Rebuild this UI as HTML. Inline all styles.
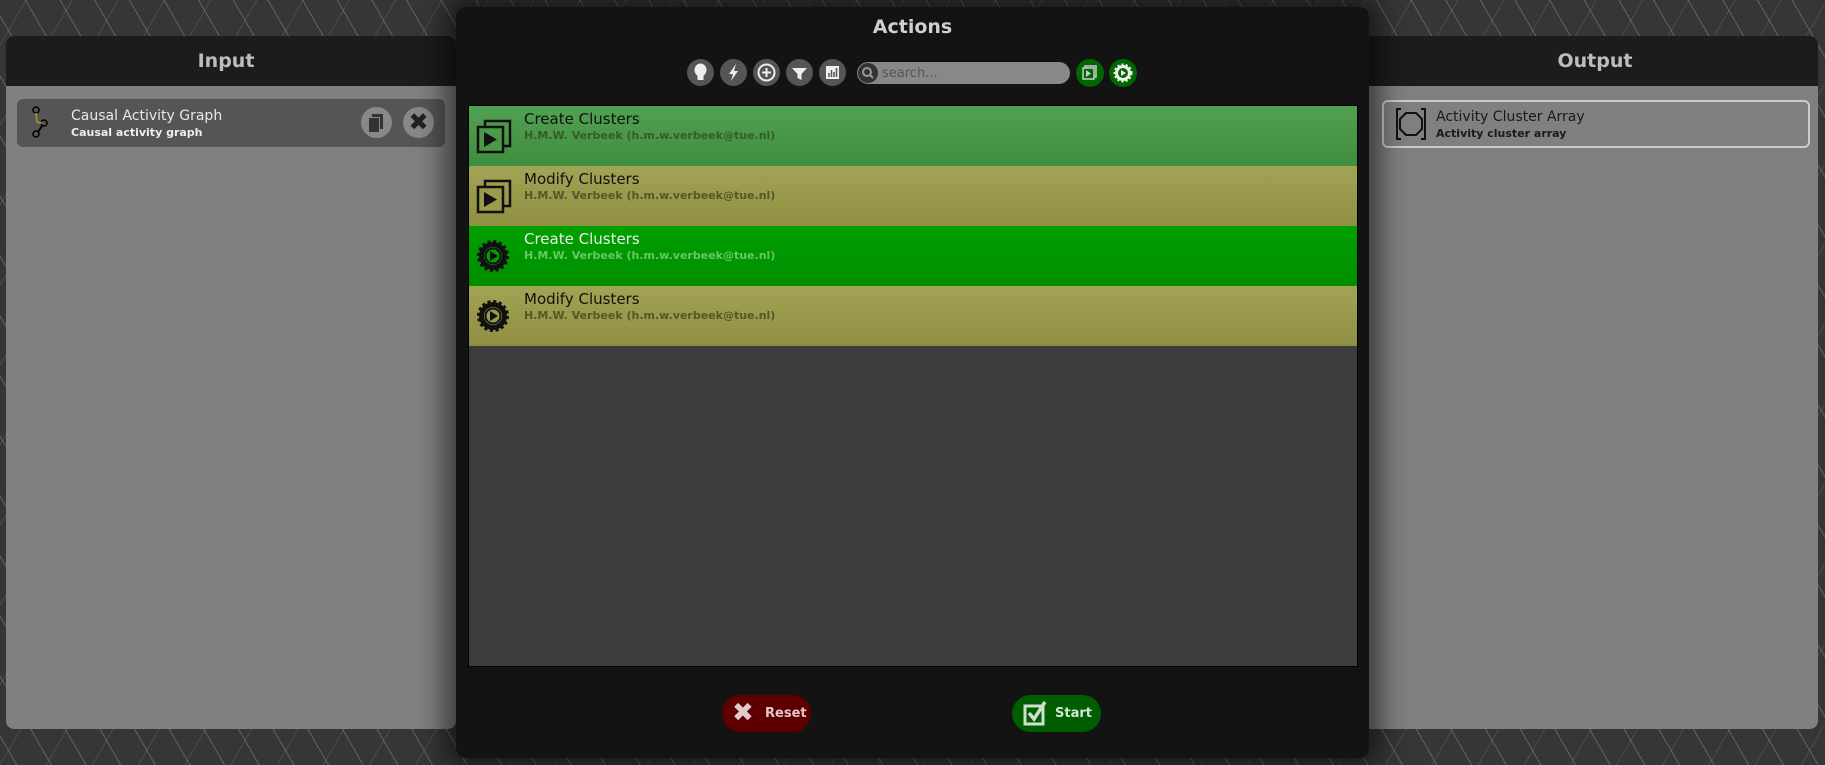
<!DOCTYPE html>
<html><head><meta charset="utf-8"><style>
*{margin:0;padding:0;box-sizing:border-box}
body{width:1825px;height:765px;overflow:hidden;position:relative;font-family:"DejaVu Sans","Liberation Sans",sans-serif;
background-color:#363636;
background-image:repeating-linear-gradient(60deg,transparent 0 14px,rgba(200,200,200,.3) 14px 15px,transparent 15px 30px),repeating-linear-gradient(-60deg,transparent 0 20px,rgba(160,160,160,.2) 20px 21px,transparent 21px 40px);}
.panel{position:absolute;top:36px;height:693px;background:#808080;border-radius:8px;overflow:hidden}
.phead{height:50px;background:#1c1c1c;color:#bdbdbd;font-weight:bold;font-size:19px;text-align:center;line-height:50px}
.item{position:absolute;border-radius:6px}
.it1{font-size:14px;color:#e8e8e8}
.it2{font-size:11px;font-weight:bold;color:#eee}
#modal{position:absolute;left:456px;top:7px;width:913px;height:751px;background:#131313;border-radius:10px;box-shadow:0 0 30px 10px rgba(0,0,0,.6)}
.title{position:absolute;top:9px;width:100%;text-align:center;color:#d0d0d0;font-weight:bold;font-size:19px}
.tb{position:absolute;top:52px;width:27px;height:27px;border-radius:50%;background:#555}
.gb{position:absolute;top:52px;width:28px;height:28px;border-radius:50%;background:#006600}
#list{position:absolute;left:12px;top:98px;width:890px;height:562px;background:#3d3d3d;border:1px solid #000}
.row{height:60px;position:relative}
.row .t{position:absolute;left:55px;top:4px;font-size:15px;color:#111}
.row .s{position:absolute;left:55px;top:23px;font-size:11px;font-weight:bold;color:#3a5a2a;letter-spacing:0}
.row svg{position:absolute;left:6px;top:12px}
.btn{position:absolute;top:688px;height:37px;border-radius:19px;color:#ddd;font-weight:bold;font-size:13px;line-height:37px}
</style></head><body>
<div class="panel" style="left:6px;width:450px"><div class="phead"><span style="position:relative;left:-5px">Input</span></div>
 <div class="item" style="left:11px;top:63px;width:428px;height:48px;background:#555">
  <svg width="30" height="34" style="position:absolute;left:14px;top:7px" viewBox="0 0 30 34"><circle cx="5" cy="4" r="3" fill="none" stroke="#000" stroke-width="1.5"/><circle cx="13" cy="17" r="3" fill="none" stroke="#000" stroke-width="1.5"/><circle cx="5" cy="28" r="3" fill="none" stroke="#000" stroke-width="1.5"/><path d="M5 7 L6 16 L11 17" stroke="#998833" stroke-width="2" fill="none"/><path d="M7 26 L11 20" stroke="#000" stroke-width="2"/></svg>
  <div class="it1" style="position:absolute;left:54px;top:9px">Causal Activity Graph</div>
  <div class="it2" style="position:absolute;left:54px;top:27px">Causal activity graph</div>
  <div style="position:absolute;left:344px;top:8px;width:31px;height:31px;border-radius:50%;background:#888"><div style="position:absolute;left:11px;top:7px;width:11px;height:15px;background:#333"></div><div style="position:absolute;left:8px;top:10px;width:11px;height:15px;background:#333;border-right:1px solid #888;border-top:1px solid #888"></div></div>
  <div style="position:absolute;left:386px;top:8px;width:31px;height:31px;border-radius:50%;background:#888;color:#222;font-size:24px;font-weight:bold;text-align:center;line-height:31px">✖</div>
 </div>
</div>
<div class="panel" style="left:1362px;width:456px"><div class="phead"><span style="position:relative;left:5px">Output</span></div>
 <div class="item" style="left:20px;top:64px;width:428px;height:48px;border:2px solid #ccc">
  <svg width="32" height="36" style="position:absolute;left:11px;top:4px" viewBox="0 0 32 36"><path d="M6 3 H2 V33 H6 M26 3 H30 V33 H26" stroke="#111" stroke-width="2" fill="none"/><polygon points="11,7 21,7 27,13 27,23 21,29 11,29 5,23 5,13" fill="none" stroke="#111" stroke-width="2"/></svg>
  <div class="it1" style="position:absolute;left:52px;top:7px;color:#1a1a1a">Activity Cluster Array</div>
  <div class="it2" style="position:absolute;left:52px;top:25px;color:#1a1a1a">Activity cluster array</div>
 </div>
</div>
<div id="modal">
 <div class="title">Actions</div>
 <div class="tb" style="left:231px"><svg width="27" height="27"><ellipse cx="13.5" cy="11" rx="6" ry="6.5" fill="#eee"/><rect x="10.5" y="16" width="6" height="5" fill="#eee"/></svg></div>
 <div class="tb" style="left:264px"><svg width="27" height="27"><path d="M16 5 L9 15 H13 L11 22 L18 12 H14 Z" fill="#eee"/></svg></div>
 <div class="tb" style="left:297px"><svg width="27" height="27"><circle cx="13.5" cy="13.5" r="8" fill="none" stroke="#eee" stroke-width="2"/><path d="M13.5 9 V18 M9 13.5 H18" stroke="#eee" stroke-width="2"/></svg></div>
 <div class="tb" style="left:330px"><svg width="27" height="27"><path d="M6 9 H21 L15.5 15 V21 L11.5 19 V15 Z" fill="#eee"/></svg></div>
 <div class="tb" style="left:363px"><svg width="27" height="27"><rect x="7" y="7" width="13" height="13" fill="#eee"/><path d="M10 18 V14 M12.5 18 V11 M15 18 V13 M17.5 18 V9" stroke="#555" stroke-width="1.5"/></svg></div>
 <div style="position:absolute;left:401px;top:55px;width:213px;height:22px;border-radius:11px;background:#888">
  <div style="position:absolute;left:1px;top:1px;width:20px;height:20px;border-radius:50%;background:#333"><svg width="20" height="20"><circle cx="9" cy="9" r="4" fill="none" stroke="#999" stroke-width="2"/><path d="M12 12 L15 15" stroke="#999" stroke-width="2"/></svg></div>
  <span style="position:absolute;left:25px;top:4px;font-size:13px;color:#555">search...</span></div>
 <div class="gb" style="left:620px"><svg width="28" height="28"><rect x="9" y="7" width="11" height="11" fill="none" stroke="#ccc" stroke-width="1.5"/><rect x="7" y="9" width="11" height="11" fill="#006600" stroke="#ccc" stroke-width="1.5"/><path d="M10 11 L15 14.5 L10 18 Z" fill="#ccc"/></svg></div>
 <div class="gb" style="left:653px"><svg width="28" height="28" viewBox="0 0 28 28"><circle cx="14" cy="14" r="8" fill="#eee" stroke="#eee" stroke-width="3" stroke-dasharray="2 2"/><circle cx="14" cy="14" r="5" fill="#006600"/><path d="M12 11 L17 14 L12 17 Z" fill="#eee"/></svg></div>
 <div id="list">
  <div class="row" style="background:linear-gradient(#52a052,#3f8d3f)"><svg width="38" height="38"><rect x="10" y="3" width="25" height="25" fill="none" stroke="#111" stroke-width="2.5"/><rect x="3" y="9" width="25" height="25" fill="#4a9a4a" stroke="#111" stroke-width="2.5"/><path d="M9 14 L22 21.5 L9 29 Z" fill="#111"/></svg><div class="t">Create Clusters</div><div class="s">H.M.W. Verbeek (h.m.w.verbeek@tue.nl)</div></div>
  <div class="row" style="background:linear-gradient(#a3a355,#8f8f42)"><svg width="38" height="38"><rect x="10" y="3" width="25" height="25" fill="none" stroke="#111" stroke-width="2.5"/><rect x="3" y="9" width="25" height="25" fill="#9b9b4c" stroke="#111" stroke-width="2.5"/><path d="M9 14 L22 21.5 L9 29 Z" fill="#111"/></svg><div class="t">Modify Clusters</div><div class="s" style="color:#55552a">H.M.W. Verbeek (h.m.w.verbeek@tue.nl)</div></div>
  <div class="row" style="background:linear-gradient(#00a000,#008e00)"><svg width="38" height="38"><circle cx="18" cy="18" r="14" fill="#111" stroke="#111" stroke-width="4" stroke-dasharray="3 2.5"/><circle cx="18" cy="18" r="9" fill="#00a000"/><circle cx="18" cy="18" r="7.5" fill="none" stroke="#111" stroke-width="2"/><path d="M15 13 L23 18 L15 23 Z" fill="#111"/></svg><div class="t" style="color:#e8f0e8">Create Clusters</div><div class="s" style="color:#66c866">H.M.W. Verbeek (h.m.w.verbeek@tue.nl)</div></div>
  <div class="row" style="background:linear-gradient(#a3a355,#8f8f42)"><svg width="38" height="38"><circle cx="18" cy="18" r="14" fill="#111" stroke="#111" stroke-width="4" stroke-dasharray="3 2.5"/><circle cx="18" cy="18" r="9" fill="#9b9b4c"/><circle cx="18" cy="18" r="7.5" fill="none" stroke="#111" stroke-width="2"/><path d="M15 13 L23 18 L15 23 Z" fill="#111"/></svg><div class="t">Modify Clusters</div><div class="s" style="color:#55552a">H.M.W. Verbeek (h.m.w.verbeek@tue.nl)</div></div>
 </div>
 <div class="btn" style="left:266px;width:89px;background:#5e0000;color:#e0caca"><span style="position:absolute;left:10px;font-size:26px">✖</span><span style="position:absolute;left:43px">Reset</span></div>
 <div class="btn" style="left:556px;width:89px;background:#005e00;color:#d0e8d0"><svg width="26" height="26" style="position:absolute;left:11px;top:5px"><rect x="2" y="6" width="18" height="18" fill="none" stroke="#cce0cc" stroke-width="3"/><path d="M6 13 L11 19 L22 2" stroke="#cce0cc" stroke-width="3.5" fill="none"/></svg><span style="position:absolute;left:43px">Start</span></div>
</div>
</body></html>
